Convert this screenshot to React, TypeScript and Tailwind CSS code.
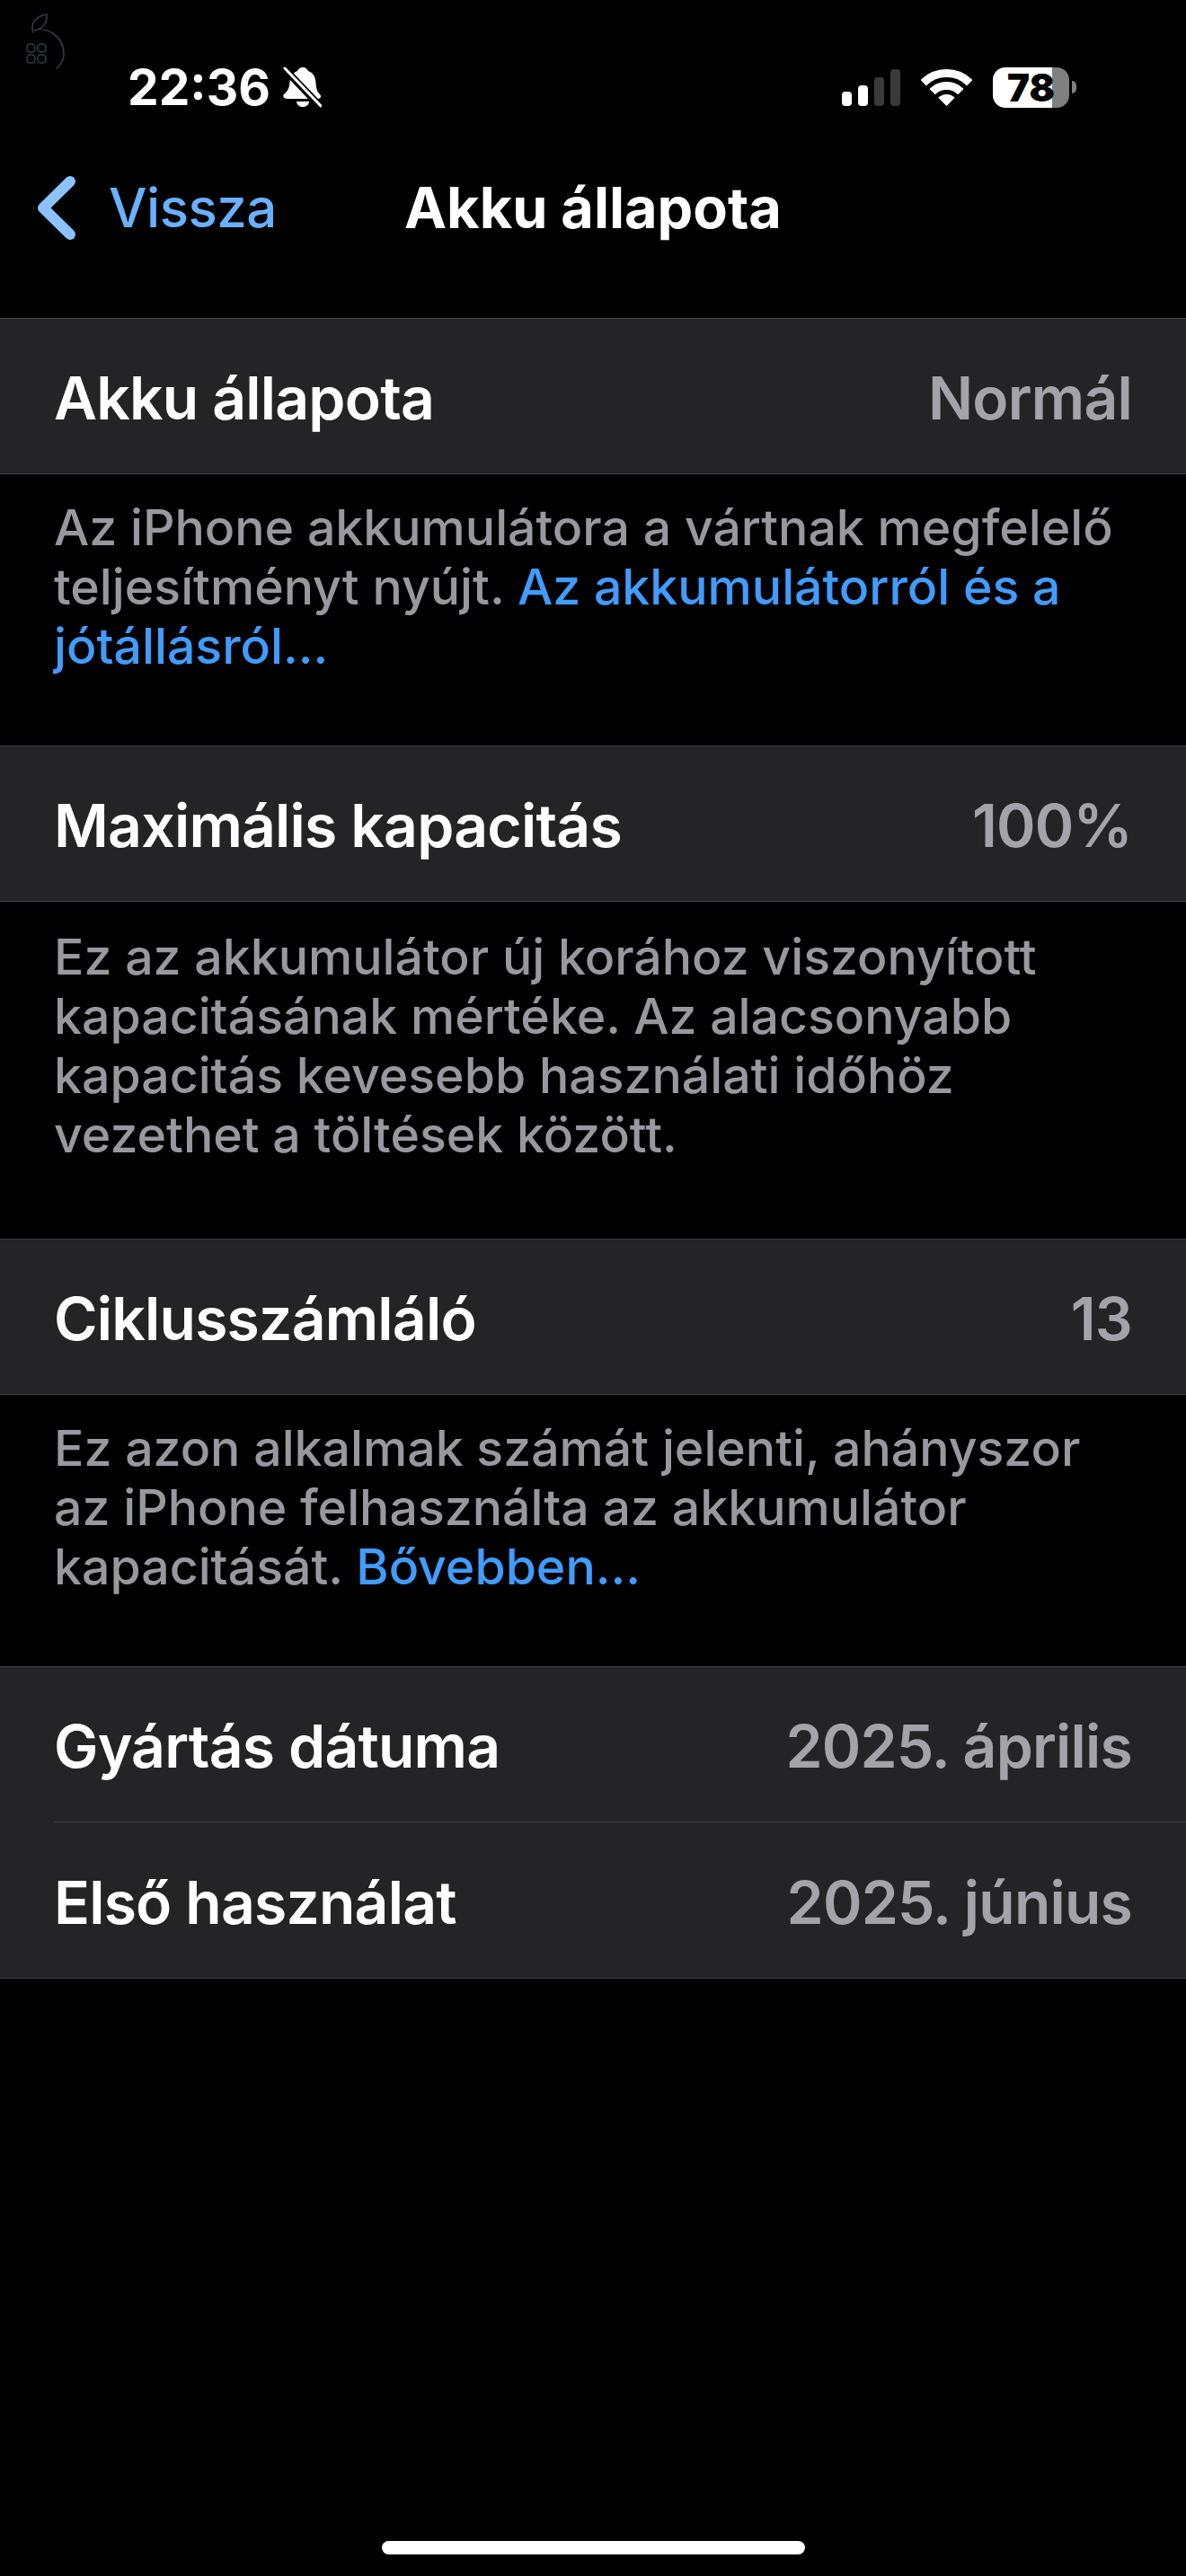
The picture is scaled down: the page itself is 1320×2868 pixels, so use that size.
import React from 'react';

// --- STATUS BAR ICONS ---
const AppleMark = () => (
    <svg className="absolute left-[29px] top-[15px]" width="43" height="62" viewBox="0 0 43 62" fill="none" stroke="#2f3b41" strokeWidth="1.6" strokeLinecap="round">
        <path d="M8 21C4 11 11 3 23 1C24 10 19 17 9 19C21 14 42 24 42 45C42 52 39 57 34 61" />
        <rect x="1" y="34" width="9" height="9" rx="3.5" />
        <rect x="13" y="34" width="9" height="9" rx="3.5" />
        <rect x="1" y="46" width="9" height="9" rx="3.5" />
        <rect x="13" y="46" width="9" height="9" rx="3.5" />
    </svg>
);

const BellSlash = () => (
    <svg width="44" height="46" viewBox="0 0 44 46" fill="none">
        <path d="M23 1C26 1 28 3 29 5C35 7 37 12 37.500 18C38 25 39 28 42 31C44 33 43 36 40 36H6C2 36 0 33 2 31C6 28 8 24 8.500 17C9 11 12 7 17 5C18 3 20 1 23 1Z" fill="#fff" />
        <path d="M16 39H30C29.500 43 26.500 45 23 45C19.500 45 16.500 43 16 39Z" fill="#fff" />
        <path d="M2 2L42 44" stroke="#000" strokeWidth="8" />
        <path d="M3 2L43 44" stroke="#fff" strokeWidth="3" strokeLinecap="round" />
    </svg>
);

const Signal = () => (
    <svg width="65" height="41" viewBox="0 0 65 41">
        <rect x="0" y="25" width="11" height="16" rx="4" fill="#fff" />
        <rect x="18" y="18" width="11" height="23" rx="4" fill="#fff" />
        <rect x="36" y="9" width="11" height="32" rx="4" fill="#3a3a3a" />
        <rect x="54" y="0" width="11" height="41" rx="4" fill="#3a3a3a" />
    </svg>
);

const Wifi = () => (
    <svg width="57" height="41" viewBox="0 0 57 41" fill="none">
        <path d="M2.700 15.200A36.500 36.500 0 0 1 54.300 15.200" stroke="#fff" strokeWidth="9" />
        <path d="M12.600 25.100A22.500 22.500 0 0 1 44.400 25.100" stroke="#fff" strokeWidth="9" />
        <path d="M28.500 41L19.300 31.800A13 13 0 0 1 37.700 31.800Z" fill="#fff" />
    </svg>
);

const Battery = () => (
    <div className="flex items-center">
        <div className="relative h-[45px] w-[85px]">
            <div className="flex h-full overflow-hidden rounded-[14px]">
                <div className="w-[66px] bg-white" />
                <div className="w-[19px] bg-[#808080]" />
            </div>
            <span className="absolute left-[16px] top-0 text-[42px] leading-[45px] font-black text-black">78</span>
        </div>
        <div className="ml-[3px] h-[14px] w-[5px] rounded-r-[5px] bg-[#808080]" />
    </div>
);

const BackChevron = () => (
    <svg width="44" height="73" viewBox="0 0 44 73" fill="none" stroke="#8cc2ff" strokeWidth="12" strokeLinecap="round" strokeLinejoin="round">
        <path d="M37 7L7 36.500L37 66" />
    </svg>
);

// --- LIST PARTS ---
interface InfoRowProps {
    label: string;
    value: string;
}

const InfoRow: React.FC<InfoRowProps> = ({ label, value }) => (
    <div className="flex h-[172px] items-center justify-between px-[60px] pt-[5px] text-[66px] font-semibold tracking-[-0.8px]">
        <span className="text-white">{label}</span>
        <span className="text-[#a3a3a9]">{value}</span>
    </div>
);

const Card: React.FC<{ children: React.ReactNode }> = ({ children }) => (
    <div className="border-y border-[#404044] bg-[#242426]">{children}</div>
);

const Link: React.FC<{ children: React.ReactNode }> = ({ children }) => (
    <span className="text-[#409cff]">{children}</span>
);

// --- MAIN PAGE COMPONENT ---
export default function App() {
    return (
        <div className="relative flex h-[2868px] w-[1320px] flex-col bg-black font-[Inter,sans-serif] text-white">
            <AppleMark />

            {/* Status bar */}
            <div className="flex h-[154px] items-center justify-between pl-[142px] pr-[122px] pt-[40px]">
                <div className="flex items-center gap-[13px]">
                    <span className="text-[55px] font-bold leading-none">22:36</span>
                    <BellSlash />
                </div>
                <div className="flex items-center gap-[23px]">
                    <Signal />
                    <Wifi />
                    <Battery />
                </div>
            </div>

            {/* Nav bar */}
            <div className="grid h-[154px] grid-cols-[1fr_auto_1fr] items-center">
                <div className="flex items-center gap-[36px] pl-[41px]">
                    <BackChevron />
                    <span className="text-[60px] font-medium tracking-[-0.5px] text-[#69b1ff]">Vissza</span>
                </div>
                <span className="text-[63px] font-bold">Akku állapota</span>
                <div />
            </div>

            <div className="mt-[46px] flex flex-col">
                <Card>
                    <InfoRow label="Akku állapota" value="Normál" />
                </Card>
                <p className="px-[60px] pb-[78px] pt-[26px] text-[55.4px] font-medium leading-[66px] text-[#98989f]">
                    Az iPhone akkumulátora a vártnak megfelelő teljesítményt nyújt. <Link>Az akkumulátorról és a jótállásról...</Link>
                </p>
                <Card>
                    <InfoRow label="Maximális kapacitás" value="100%" />
                </Card>
                <p className="px-[60px] pb-[83px] pt-[28px] text-[55.4px] font-medium leading-[66px] text-[#98989f]">
                    Ez az akkumulátor új korához viszonyított kapacitásának mértéke. Az alacsonyabb kapacitás kevesebb használati időhöz vezethet a töltések között.
                </p>
                <Card>
                    <InfoRow label="Ciklusszámláló" value="13" />
                </Card>
                <p className="px-[60px] pb-[78px] pt-[26px] text-[55.4px] font-medium leading-[66px] text-[#98989f]">
                    Ez azon alkalmak számát jelenti, ahányszor az iPhone felhasználta az akkumulátor kapacitását. <Link>Bővebben...</Link>
                </p>
                <Card>
                    <InfoRow label="Gyártás dátuma" value="2025. április" />
                    <div className="mb-px ml-[60px] h-px bg-[#404044]" />
                    <InfoRow label="Első használat" value="2025. június" />
                </Card>
            </div>

            <div className="mb-[24px] ml-[425px] mt-auto h-[15px] w-[471px] rounded-full bg-white" />
        </div>
    );
}
